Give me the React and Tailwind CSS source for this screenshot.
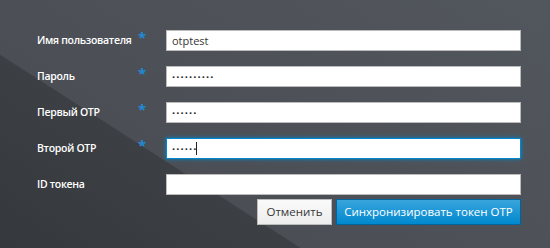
// OTP sync form — dark login-style backdrop with diagonal shading
const fields = [
  { label: 'Имя пользователя', value: 'otptest', required: true },
  { label: 'Пароль', value: '··········', required: true, dots: true },
  { label: 'Первый OTP', value: '······', required: true, dots: true },
  { label: 'Второй OTP', value: '······', required: true, dots: true, focused: true },
  { label: 'ID токена', value: '', required: false },
];

const Field = ({ label, value, required, focused, dots }) => (
  <div className="flex items-center h-[21px]">
    <label className="w-[101px] text-[10.5px] font-semibold tracking-[-0.3px] text-white leading-none whitespace-nowrap">
      {label}
    </label>
    <span className="w-[28px] text-[15px] font-bold text-[#1f8ad6] leading-none -mt-[6px]">
      {required ? '*' : ''}
    </span>
    <div className="relative flex-1 h-[21px]">
      <input
        type="text"
        readOnly
        value={value}
        className={
          (focused
            ? 'border-[#0088ce] shadow-[0_0_4px_#0088ce] '
            : 'border-[#bbbbbb] ') +
          (dots ? 'tracking-[1.1px] font-bold text-[#222] ' : 'text-[#363636] ') +
          'block w-full h-full bg-white border px-[5px] text-[11px] outline-none'
        }
      />
      {focused && <span className="absolute left-[30px] top-[4px] w-px h-[13px] bg-[#222]" />}
    </div>
  </div>
);

export default function App() {
  return (
    <div
      className="w-full h-[248px] overflow-hidden bg-[linear-gradient(212.75deg,#52575d_0px,#4b4f55_343px,#3c3f43_344px,#35383c_100%)]"
      style={{ fontFamily: '"Open Sans", "Noto Sans", sans-serif' }}
    >
      <div className="pl-[37px] pr-[29px] pt-[30px] flex flex-col gap-[15px]">
        {fields.map((f) => (
          <Field key={f.label} {...f} />
        ))}
      </div>
      <div className="flex justify-end gap-[4px] pr-[29px] mt-[4px]">
        <button className="h-[26px] w-[75px] border border-[#bbbbbb] bg-[linear-gradient(#fafafa,#ededed)] text-[11.5px] text-[#363636]">
          Отменить
        </button>
        <button className="h-[26px] w-[185px] border border-[#00659c] bg-[linear-gradient(#39a5dc,#0088ce)] text-[11.5px] text-white">
          Синхронизировать токен OTP
        </button>
      </div>
    </div>
  );
}
